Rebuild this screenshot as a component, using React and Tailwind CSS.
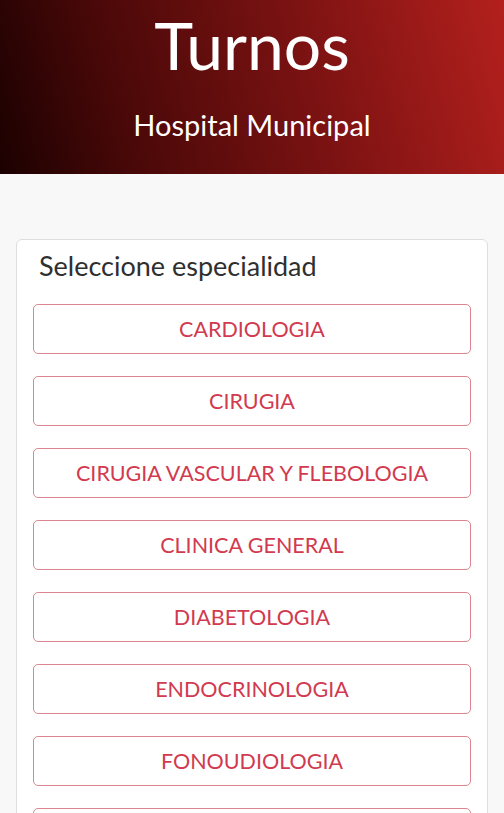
import React from "react";

const especialidades = [
  "Cardiologia",
  "Cirugia",
  "Cirugia vascular y flebologia",
  "Clinica general",
  "Diabetologia",
  "Endocrinologia",
  "Fonoudiologia",
  "Gastroenterologia",
];

export default function App() {
  return (
    <div
      className="min-h-screen bg-[#f8f8f8]"
      style={{ fontFamily: "Lato, 'Open Sans', sans-serif" }}
    >
      <header className="h-[174px] bg-[linear-gradient(75deg,#1c0101_0%,#4a0808_25%,#7a1212_60%,#b3201d_100%)] flex flex-col items-center text-white">
        <h1 className="mt-[6px] text-[66px] leading-[78px] font-normal">Turnos</h1>
        <p className="mt-[24px] text-[29px] leading-[34px]">Hospital Municipal</p>
      </header>

      <main className="px-4 pt-[65px]">
        <div className="bg-white border border-[#dedede] rounded-md px-4 pt-[9px] pb-6">
          <h2 className="pl-[6px] text-[27px] leading-[34px] text-[#2f2f2f]">
            Seleccione especialidad
          </h2>
          <div className="mt-[21px] flex flex-col gap-[22px]">
            {especialidades.map((e) => (
              <button
                key={e}
                className="h-[50px] w-full rounded-[5px] border border-[#de8592] bg-white uppercase text-[21.5px] text-[#d13a4f]"
              >
                {e}
              </button>
            ))}
          </div>
        </div>
      </main>
    </div>
  );
}
